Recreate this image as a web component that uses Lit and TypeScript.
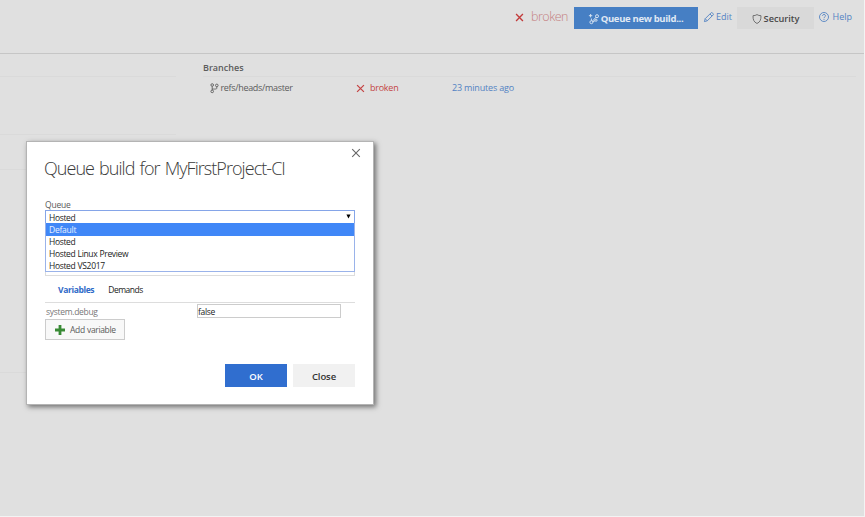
import { LitElement, html, css, svg } from "lit";
import { customElement, property, state } from "lit/decorators.js";
import { classMap } from "lit/directives/class-map.js";

const icons: Record<string, unknown> = {
  cross: svg`<path d="M1.2 1.2L8.8 8.8M8.8 1.2L1.2 8.8"/>`,
  branch: svg`<circle cx="2.2" cy="2" r="1.3"/><circle cx="6.8" cy="2.4" r="1.3"/><circle cx="2.2" cy="8.4" r="1.3"/><path d="M2.2 3.3v3.8M6.8 3.700v1.500c0 .8-1 1-4.6 .8"/>`,
  build: svg`<circle cx="8" cy="2.2" r="1.5"/><circle cx="7" cy="6.200" r="1.1"/><circle cx="2.4" cy="8.2" r="1.5"/><path d="M1.600 0v3.4M-.1 1.7h3.4M2.400 6.6V4.500M3.5 7.1L7 3.2M3.800 8L6 6.700"/>`,
  pencil: svg`<path d="M.4 9.6L1.2 6.7 7.2.7c.7-.7 2.800 1.400 2.100 2.100L3.300 8.800zM6 2l2 2M1.2 6.7l2.100 2.100"/>`,
  shield: svg`<path d="M5 .6c1.2.8 2.5 1.1 4 1.1 0 4-.7 6.2-4 7.8C1.7 7.900 1 5.700 1 1.700 2.500 1.700 3.800 1.400 5 .6z"/>`,
  help: svg`<circle cx="5" cy="5" r="4.5"/><path d="M3.500 3.900c0-2 3-1.900 3-.1C6.500 4.900 5 4.900 5 6.200M5 7.100v.9"/>`,
  plus: svg`<path d="M5 0v10M0 5h10"/>`,
  arrow: svg`<path d="M2 2h6L5 8z" fill="currentColor" stroke="none"/>`,
};

@customElement("ui-icon")
class UiIcon extends LitElement {
  @property() name = "";
  static styles = css`
    :host { display: inline-block; width: 10px; height: 10px; flex: none; }
    svg { display: block; width: 100%; height: 100%; overflow: visible; fill: none; stroke: currentColor; stroke-width: var(--stroke, .9); }
  `;
  render() {
    return html`<svg viewBox="0 0 10 10">${icons[this.name]}</svg>`;
  }
}

@customElement("queue-dialog")
class QueueDialog extends LitElement {
  @state() private active = "Default";
  private options = ["Default", "Hosted", "Hosted Linux Preview", "Hosted VS2017"];

  static styles = css`
    :host { display: block; box-sizing: border-box; width: 348px; height: 264px; background: #fff; border: 1px solid #b4b4b4; box-shadow: 2px 2px 5px rgba(0,0,0,.5); padding: 0 18px; color: #5a5a5a; font-size: 8.5px; line-height: 12px; letter-spacing: -.35px; word-spacing: .4px; }
    * { box-sizing: border-box; }
    .close { display: flex; justify-content: flex-end; height: 16px; padding: 6px 0 0; margin-right: -6px; color: #666; }
    .close ui-icon { width: 10px; height: 10px; --stroke: 1.1; }
    h1 { margin: 0 0 0 -1px; height: 41px; font-size: 18px; line-height: 21px; font-weight: 300; color: #3a3a3a; letter-spacing: -.95px; word-spacing: 1.3px; white-space: nowrap; }
    .label { height: 11px; line-height: 12px; letter-spacing: -.2px; }
    .field { position: relative; height: 66px; border: 1px solid #ddd; border-top: 0; color: #222; }
    .select { display: flex; align-items: center; justify-content: space-between; height: 14px; margin: 0 -1px; padding: 1px 2px 0 3px; border: 1px solid #85a5e8; }
    .select ui-icon { width: 7px; height: 7px; color: #000; margin-top: -2px; }
    .menu { position: absolute; left: -1px; right: -1px; top: 13px; height: 49px; border: 1px solid #9ab3ea; border-top: 0; background: #fff; }
    .option { height: 12px; padding: 0 3px; line-height: 12px; }
    .option.active { height: 13px; line-height: 14px; background: #4087f7; color: #e8f0ff; letter-spacing: -.25px; }
    .tabs { display: flex; gap: 14px; height: 27px; padding: 8px 0 0 13px; border-bottom: 1px solid #ddd; color: #222; letter-spacing: -.5px; }
    .tabs b { color: #2f6ac8; font-weight: 700; letter-spacing: -.36px; }
    .row { display: flex; height: 16px; padding: 1px 14px 0 1px; align-items: flex-start; }
    .key { width: 151px; line-height: 16px; color: #777; letter-spacing: -.3px; }
    .value { flex: 1; height: 14px; border: 1px solid #ccc; line-height: 14px; color: #222; }
    .add { display: flex; align-items: center; width: 80px; height: 21px; padding: 0 0 0 9px; gap: 5px; border: 1px solid #ccc; background: #f8f8f8; white-space: nowrap; }
    .add ui-icon { color: #388a34; --stroke: 2.8; }
    .actions { display: flex; justify-content: flex-end; gap: 6px; margin-top: 24px; font-weight: 600; font-size: 9.5px; letter-spacing: -.1px; }
    .button { width: 62px; height: 23px; line-height: 25px; text-align: center; background: #f1f1f1; color: #333; }
    .button.primary { background: #306ecf; color: #fff; }
  `;
  render() {
    return html`
      <div class="close"><ui-icon name="cross"></ui-icon></div>
      <h1>Queue build for MyFirstProject-CI</h1>
      <div class="label">Queue</div>
      <div class="field">
        <div class="select"><span>Hosted</span><ui-icon name="arrow"></ui-icon></div>
        <div class="menu">
          ${this.options.map((o) => html`<div class=${classMap({ option: true, active: o === this.active })} @mouseenter=${() => (this.active = o)}>${o}</div>`)}
        </div>
      </div>
      <div class="tabs"><b>Variables</b><span>Demands</span></div>
      <div class="row"><span class="key">system.debug</span><span class="value">false</span></div>
      <div class="add"><ui-icon name="plus"></ui-icon><span>Add variable</span></div>
      <div class="actions"><div class="button primary">OK</div><div class="button">Close</div></div>
    `;
  }
}

@customElement("app-root")
class AppRoot extends LitElement {
  static styles = css`
    :host { display: block; box-sizing: border-box; position: relative; width: 865px; height: 517px; overflow: hidden; background: #e0e0e0; border: solid #f3f3f3; border-width: 0 1px 1px 0; font-family: "Open Sans", "Noto Sans", sans-serif; color: #5c5c5c; font-size: 9px; line-height: 14px; white-space: nowrap; }
    * { box-sizing: border-box; }
    header { display: flex; height: 54px; padding: 7px 12px 0 0; justify-content: flex-end; border-bottom: 1px solid #c6c6c6; }
    .item { display: flex; align-items: center; height: 20px; }
    .status { color: #c58080; font-size: 12.5px; font-weight: 300; gap: 7px; margin-right: 6px; letter-spacing: -.5px; }
    .status ui-icon { color: #c23b3b; width: 9px; height: 9px; --stroke: 1.5; }
    .btn { display: flex; align-items: center; justify-content: center; height: 22px; padding-top: 2px; gap: 2px; font-weight: 700; }
    .queue { width: 124px; background: #467fc4; color: #e0e9f4; font-size: 9.5px; letter-spacing: -.32px; }
    .link { color: #5383c3; justify-content: space-between; }
    .edit { width: 28px; margin: 0 5px 0 6px; }
    .help { width: 33px; }
    .security { width: 77px; margin-right: 5px; background: #d9d9d9; color: #484848; font-size: 9.2px; font-weight: 600; }
    .security ui-icon { color: #666; }
    main { display: grid; grid-template-columns: 176px 1fr; column-gap: 27px; }
    .side i { display: block; border-bottom: 1px solid #dadada; }
    .l1 { height: 23px; } .l2 { height: 58px; } .l3 { height: 35px; } .l4 { height: 203px; }
    .heading { height: 23px; padding-top: 7px; border-bottom: 1px solid #dadada; font-weight: 600; margin-right: 8px; }
    .branch { display: grid; grid-template-columns: 146px 96px auto; padding: 4px 0 0 7px; }
    .cell { display: flex; align-items: center; letter-spacing: -.32px; gap: .5px; }
    .bad { color: #c44444; gap: 5px; letter-spacing: -.25px; }
    .bad ui-icon { width: 9px; height: 9px; --stroke: 1.4; }
    .time { color: #5383c3; letter-spacing: -.18px; }
    queue-dialog { position: absolute; left: 26px; top: 141px; }
  `;
  render() {
    return html`
      <header>
        <div class="item status"><ui-icon name="cross"></ui-icon><span>broken</span></div>
        <div class="btn queue"><ui-icon name="build"></ui-icon><span>Queue new build...</span></div>
        <div class="item link edit"><ui-icon name="pencil"></ui-icon><span>Edit</span></div>
        <div class="btn security"><ui-icon name="shield"></ui-icon><span>Security</span></div>
        <div class="item link help"><ui-icon name="help"></ui-icon><span>Help</span></div>
      </header>
      <main>
        <div class="side"><i class="l1"></i><i class="l2"></i><i class="l3"></i><i class="l4"></i></div>
        <div>
          <div class="heading">Branches</div>
          <div class="branch">
            <div class="cell"><ui-icon name="branch"></ui-icon><span>refs/heads/master</span></div>
            <div class="cell bad"><ui-icon name="cross"></ui-icon><span>broken</span></div>
            <div class="cell time">23 minutes ago</div>
          </div>
        </div>
      </main>
      <queue-dialog></queue-dialog>
    `;
  }
}
